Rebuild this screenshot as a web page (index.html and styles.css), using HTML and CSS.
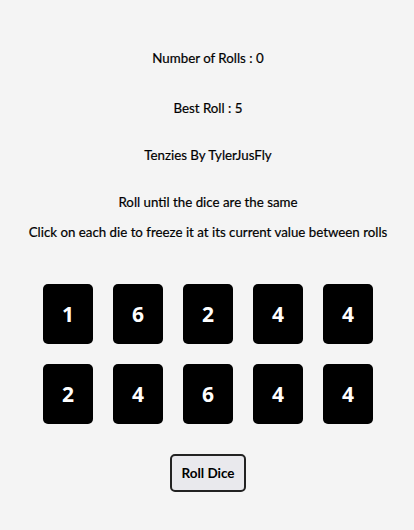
FILE: index.html
```html
<!DOCTYPE html>
<html>
<head>
<meta charset="utf-8">
<link rel="stylesheet" href="styles.css">
</head>
<body>
<main class="app">
  <p class="line stat">Number of Rolls : 0</p>
  <p class="line stat best">Best Roll : 5</p>
  <p class="line title">Tenzies By TylerJusFly</p>
  <p class="line rule">Roll until the dice are the same</p>
  <p class="line rule2">Click on each die to freeze it at its current value between rolls</p>
  <div class="dice">
    <div class="die">1</div>
    <div class="die">6</div>
    <div class="die">2</div>
    <div class="die">4</div>
    <div class="die">4</div>
    <div class="die">2</div>
    <div class="die">4</div>
    <div class="die">6</div>
    <div class="die">4</div>
    <div class="die">4</div>
  </div>
  <button class="roll">Roll Dice</button>
</main>
</body>
</html>
```
FILE: styles.css
```css
html, body {
  margin: 0;
  padding: 0;
  background: #f4f4f4;
}
.app {
  font-family: "Lato", "Open Sans", sans-serif;
  font-size: 13.3px;
  color: #000;
  display: flex;
  flex-direction: column;
  align-items: center;
  padding-top: 50px;
  padding-left: 2px;
}
.line {
  margin: 0;
  line-height: 16px;
  -webkit-text-stroke: 0.2px #000;
}
.stat { margin-bottom: 34px; }
.stat.best { margin-bottom: 31px; }
.title { margin-bottom: 31px; }
.rule { margin-bottom: 14px; }
.rule2 { margin-bottom: 44px; }
.dice {
  display: grid;
  grid-template-columns: repeat(5, 50px);
  grid-auto-rows: 60px;
  gap: 20px;
}
.die {
  background: #000;
  color: #fff;
  border-radius: 5px;
  display: flex;
  align-items: center;
  justify-content: center;
  font-family: "Open Sans", sans-serif;
  font-weight: 700;
  font-size: 21px;
}
.roll {
  margin-top: 30px;
  width: 76px;
  height: 38px;
  border: 2px solid #222;
  border-radius: 5px;
  background: #e9e9ed;
  font-family: "Lato", sans-serif;
  font-weight: 700;
  font-size: 13.5px;
  color: #000;
  padding: 0;
}
```
